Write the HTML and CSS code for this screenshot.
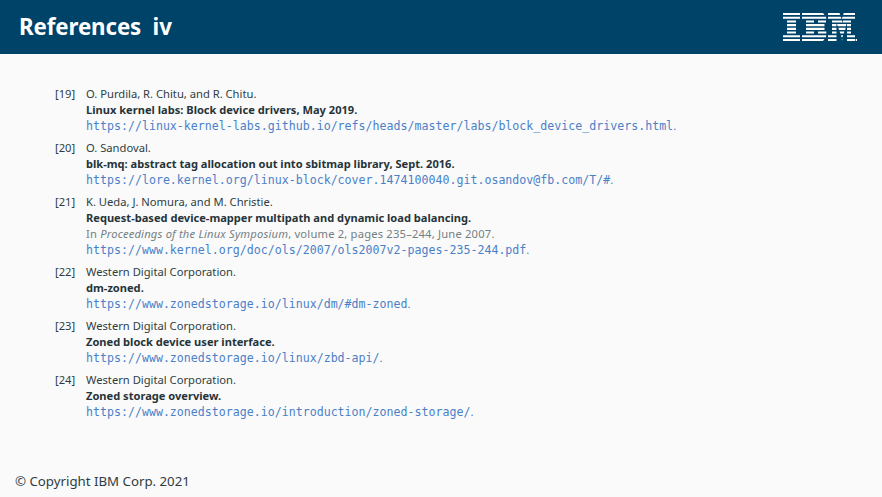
FILE: index.html
```html
<!DOCTYPE html>
<html lang="en">
<head>
<meta charset="utf-8">
<title>References iv</title>
<link rel="stylesheet" href="styles.css">
</head>
<body>
<div class="slide">
  <header class="head">
    <h1 class="title">References&nbsp; iv</h1>
    <svg class="logo" width="74" height="28" viewBox="0 0 74 28" fill="#fff" aria-label="IBM">
      <path d="M0 0h17v2.1H0zM0 3.7h17v2.1H0zM4 7.4h9v2.1H4zM4 11.1h9v2.1H4zM4 14.8h9v2.1H4zM4 18.5h9v2.1H4zM0 22.2h17v2.1H0zM0 25.9h17V28H0z"/>
      <path d="M19 0h21l1.5 2.1H19zM19 3.7h24l.3 2.1H19zM23 7.4h8v2.1h-8zM35 7.4h8v2.1h-8zM23 11.1h18.5v2.1H23zM23 14.8h18.5v2.1H23zM23 18.5h8v2.1h-8zM35 18.5h8.3v2.1H35zM19 22.2h24.3l-.3 2.1H19zM19 25.9h22.5L40 28H19z"/>
      <path d="M45 0h11.5l.7 2.1H45zM60.8 0H72v2.1H60.1zM45 3.7h12.8l.7 2.1H45zM59.5 3.7H72v2.1H58.8zM49 7.4h10v2.1H49zM60 7.4h8v2.1h-8.7zM49 11.1h4.5v2.1H49zM54 11.1h9.500l-.6 2.1H54.700zM64 11.1h4v2.1h-4zM49 14.8h4.500v2.1H49zM55.300 14.800h7.400l-.6 2.100H56zM64 14.800h4v2.100h-4zM49 18.500h4.500v2.100H49zM56.600 18.500h4.800l-.6 2.100H57.300zM64 18.500h4v2.100h-4zM45 22.200h8.500v2.100H45zM57.900 22.200h2.200l-.6 2.100h-1zM64 22.200h8v2.100h-8zM45 25.900h8.500V28H45zM58.700 25.900h.600L59 28zM64 25.900h8V28h-8zM72.700 25.900H74V28h-1.300z"/>
    </svg>
  </header>
  <main class="refs">
    <div class="ref"><span class="num">[19]</span><div class="body">
      <div>O. Purdila, R. Chitu, and R. Chitu.</div>
      <div class="b">Linux kernel labs: Block device drivers, May 2019.</div>
      <div><a class="url">https://linux-kernel-labs.github.io/refs/heads/master/labs/block_device_drivers.html</a><span class="dot">.</span></div>
    </div></div>
    <div class="ref"><span class="num">[20]</span><div class="body">
      <div>O. Sandoval.</div>
      <div class="b">blk-mq: abstract tag allocation out into sbitmap library, Sept. 2016.</div>
      <div><a class="url">https://lore.kernel.org/linux-block/cover.1474100040.git.osandov@fb.com/T/#</a><span class="dot">.</span></div>
    </div></div>
    <div class="ref"><span class="num">[21]</span><div class="body">
      <div>K. Ueda, J. Nomura, and M. Christie.</div>
      <div class="b">Request-based device-mapper multipath and dynamic load balancing.</div>
      <div class="g">In <i>Proceedings of the Linux Symposium</i>, volume 2, pages 235–244, June 2007.</div>
      <div><a class="url">https://www.kernel.org/doc/ols/2007/ols2007v2-pages-235-244.pdf</a><span class="dot">.</span></div>
    </div></div>
    <div class="ref"><span class="num">[22]</span><div class="body">
      <div>Western Digital Corporation.</div>
      <div class="b">dm-zoned.</div>
      <div><a class="url">https://www.zonedstorage.io/linux/dm/#dm-zoned</a><span class="dot">.</span></div>
    </div></div>
    <div class="ref"><span class="num">[23]</span><div class="body">
      <div>Western Digital Corporation.</div>
      <div class="b">Zoned block device user interface.</div>
      <div><a class="url">https://www.zonedstorage.io/linux/zbd-api/</a><span class="dot">.</span></div>
    </div></div>
    <div class="ref"><span class="num">[24]</span><div class="body">
      <div>Western Digital Corporation.</div>
      <div class="b">Zoned storage overview.</div>
      <div><a class="url">https://www.zonedstorage.io/introduction/zoned-storage/</a><span class="dot">.</span></div>
    </div></div>
  </main>
  <footer class="foot">© Copyright IBM Corp. 2021</footer>
</div>
</body>
</html>
```
FILE: styles.css
```css
* { box-sizing: border-box; }
html, body { margin: 0; padding: 0; }
body { background: #fafafa; font-family: "Noto Sans", "Open Sans", sans-serif; color: #2f3d42; }
.slide { width: 882px; height: 497px; display: flex; flex-direction: column; background: #fafafa; }
.head { height: 54px; background: #004368; display: flex; align-items: center; justify-content: space-between; padding: 0 25px 0 19px; flex: none; }
.title { margin: 0; color: #fff; font-size: 22.3px; font-weight: 700; line-height: 52px; letter-spacing: -0.1px; }
.logo { display: block; flex: none; }
.refs { flex: 1; padding: 32px 0 0 55px; font-size: 11.2px; line-height: 16px; }
.ref { display: flex; margin-bottom: 6px; }
.num { width: 31px; flex: none; }
.b { font-weight: 700; font-size: 11.1px; color: #263439; }
.g { color: #747f84; letter-spacing: 0.19px; }
.url { font-family: "DejaVu Sans Mono", monospace; font-size: 11.62px; color: #4a80c8; }
.dot { color: #4a80c8; }
.foot { flex: none; height: 24px; padding-left: 15px; font-size: 13.25px; line-height: 16px; }
```
